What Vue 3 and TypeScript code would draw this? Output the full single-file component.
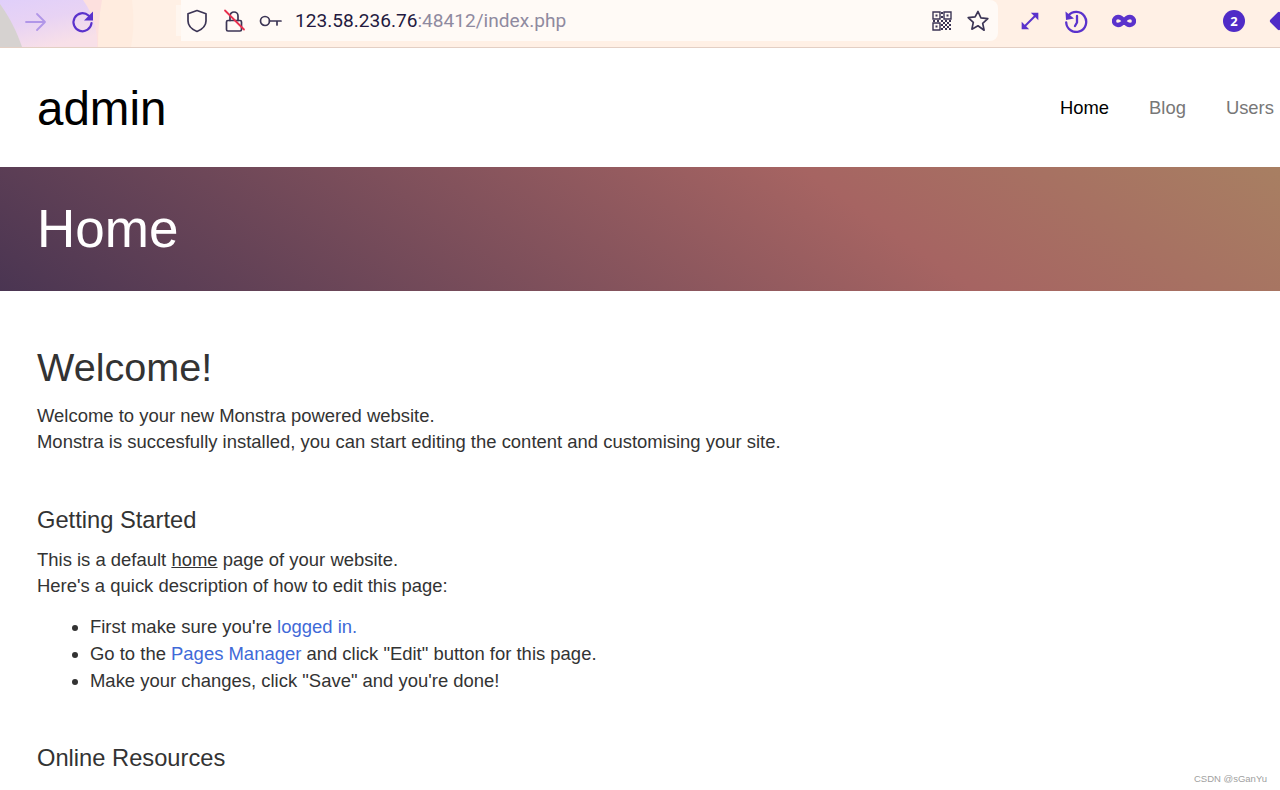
<script setup lang="ts">
const navItems = [
  { label: 'Home', active: true },
  { label: 'Blog', active: false },
  { label: 'Users', active: false },
]
</script>

<template>
  <div class="page">
    <div class="toolbar">
      <svg class="wash" viewBox="0 0 180 47" preserveAspectRatio="none">
        <path d="M0 0H132C134 16 134 32 131 47H0Z" fill="#ffecdf" />
        <path d="M0 0H102C99 16 98 32 98 47H0Z" fill="#fde0de" />
        <path d="M0 0H83C93 14 98 30 97 47H0Z" fill="url(#lilac)" />
        <path d="M0 4C10 18 17 32 22 47H0Z" fill="#d6d2d0" />
        <defs>
          <linearGradient id="lilac" x1="0" y1="0" x2="0.500" y2="1">
            <stop offset="0" stop-color="#e0cffa" />
            <stop offset="0.500" stop-color="#e8d3f4" />
            <stop offset="1" stop-color="#f8e0e8" />
          </linearGradient>
        </defs>
      </svg>
      <div class="nav-buttons">
        <svg class="ic fwd" viewBox="0 0 24 24"><path d="M2 12h19M13 4l8 8-8 8" /></svg>
        <svg class="ic reload" viewBox="0 0 24 24"><path d="M20.500 13a9 9 0 1 1-3-7.500L20 8" /><path class="fill" d="M22 1.500v9h-9z" /></svg>
      </div>
      <div class="urlbar">
        <svg class="ic ub" viewBox="0 0 24 24"><path d="M12 1.500l9 3.200v7.300c0 5-3.500 8.200-9 10.500-5.500-2.300-9-5.500-9-10.500V4.700z" /></svg>
        <svg class="ic ub lock" viewBox="0 0 24 24"><rect x="4.500" y="11.500" width="15" height="10.500" rx="1.500" /><path d="M8 11.500V7a4 4 0 0 1 8 0v4.500" /><path class="slash" d="M3 1.500l19 19" /></svg>
        <svg class="ic ub key" viewBox="0 0 24 24"><circle cx="7" cy="12" r="4.500" /><path d="M11.500 12H23M19 12v4" /></svg>
        <div class="url">123.58.236.76<span class="url-rest">:48412/index.php</span></div>
        <svg class="ic qr" viewBox="0 0 20 20">
          <path class="qr-outline" d="M1 1h7v7H1zM12 1h7v7h-7zM1 12h7v7H1z" />
          <path class="qr-dots" d="M3.500 3.500h2v2h-2zM14.500 3.500h2v2h-2zM3.500 14.500h2v2h-2zM9 1h2v2H9zM9 5h2v2H9zM9 9h2v2H9zM1 9h2v2H1zM5 9h2v2H5zM13 9h2v2h-2zM17 9h2v2h-2zM11 11h2v2h-2zM15 11h2v2h-2zM9 13h2v2H9zM13 13h2v2h-2zM17 13h2v2h-2zM11 15h2v2h-2zM15 15h2v2h-2zM9 17h2v2H9zM13 17h2v2h-2zM17 17h2v2h-2z" />
        </svg>
        <svg class="ic ub star" viewBox="0 0 24 24"><path d="M12 2.500l2.900 6.300 6.900.8-5.100 4.700 1.400 6.900L12 16.800l-6.100 3.400 1.400-6.900-5.100-4.700 6.900-.8z" /></svg>
      </div>
      <div class="ext">
        <svg class="ic expand" viewBox="0 0 24 24"><path d="M6 18L18 6" /><path class="fill" d="M13 2h9v9zM2 13v9h9z" /></svg>
        <svg class="ic history" viewBox="0 0 24 24"><path d="M4.500 6.500a10 10 0 1 1-2.300 7" /><path class="fill" d="M1.500 2.500l8.500 7-8 1.500z" /><path d="M13 7v6.500l-2 3.500" /></svg>
        <svg class="ic inf" viewBox="0 0 24 24"><path d="M12 12c-2-3-4-4-6-4a4 4 0 0 0 0 8c2 0 4-1 6-4s4-4 6-4a4 4 0 0 1 0 8c-2 0-4-1-6-4z" /></svg>
        <div class="badge">2</div>
        <div class="diamond"></div>
      </div>
    </div>

    <header class="site-head">
      <div class="brand">admin</div>
      <nav class="site-nav">
        <a v-for="item in navItems" :key="item.label" :class="{ active: item.active }">{{ item.label }}</a>
      </nav>
    </header>

    <section class="hero"><h1>Home</h1></section>

    <main class="content">
      <h2>Welcome!</h2>
      <p>Welcome to your new Monstra powered website.<br />Monstra is succesfully installed, you can start editing the content and customising your site.</p>
      <h3>Getting Started</h3>
      <p>This is a default <u>home</u> page of your website.<br />Here's a quick description of how to edit this page:</p>
      <ul>
        <li>First make sure you're <a>logged in.</a></li>
        <li>Go to the <a>Pages Manager</a> and click "Edit" button for this page.</li>
        <li>Make your changes, click "Save" and you're done!</li>
      </ul>
      <h3 class="last">Online Resources</h3>
    </main>

    <div class="watermark">CSDN @sGanYu</div>
  </div>
</template>

<style>
html, body { margin: 0; background: #fff; overflow: hidden; }
</style>

<style scoped>
.page {
  position: relative;
  width: 1280px;
  height: 790px;
  overflow: hidden;
  font-family: "Liberation Sans", Arial, sans-serif;
  color: #333;
  background: #fff;
}
.toolbar {
  position: relative;
  height: 47px;
  display: flex;
  align-items: flex-start;
  overflow: hidden;
  border-bottom: 1.500px solid #e3cfc4;
  background: #fff0e5;
}
.wash {
  position: absolute;
  left: 0;
  top: 0;
  width: 180px;
  height: 47px;
}
.nav-buttons {
  position: relative;
  display: flex;
  align-items: center;
  gap: 23px;
  height: 44px;
  padding-left: 24px;
  width: 181px;
  flex: none;
  box-sizing: border-box;
}
.ic {
  width: 24px;
  height: 24px;
  fill: none;
  stroke-linecap: round;
  stroke-linejoin: round;
  flex: none;
}
.ic .fill { fill: currentColor; stroke: none; }
.fwd { stroke: #b196e8; stroke-width: 1.800; }
.reload { color: #5a32cc; stroke: #5a32cc; stroke-width: 2.200; }
.urlbar {
  position: relative;
  width: 817px;
  height: 41px;
  flex: none;
  display: flex;
  align-items: center;
  background: #fffaf6;
  border-radius: 0 8px 8px 0;
  box-sizing: border-box;
  padding: 0 0 0 4px;
}
.urlbar::before {
  content: "";
  position: absolute;
  left: -5px;
  top: 5px;
  width: 5px;
  height: 31px;
  background: #fff6ef;
}
.ub { stroke: #3c3555; stroke-width: 1.700; }
.lock { margin-left: 13px; }
.lock .slash { stroke: #e8304e; stroke-width: 1.800; }
.key { margin-left: 12px; }
.url {
  margin-left: 13px;
  width: 637px;
  flex: none;
  font-family: Roboto, "Noto Sans", sans-serif;
  font-size: 19.100px;
  color: #23193f;
  white-space: nowrap;
}
.url-rest { color: #8f8aa0; }
.qr { width: 20px; height: 20px; }
.qr .qr-outline { stroke: #3c3555; stroke-width: 1.400; stroke-linejoin: miter; }
.qr .qr-dots { fill: #3c3555; stroke: none; }
.star { margin-left: 14px; }
.ext {
  position: relative;
  flex: 1;
  display: flex;
  align-items: center;
  padding-left: 22px;
  height: 41px;
}
.expand { width: 20px; height: 20px; color: #5a32cc; stroke: #5a32cc; stroke-width: 2.400; }
.history { margin-left: 24px; color: #5a32cc; stroke: #5a32cc; stroke-width: 2.300; }
.inf { margin-left: 24px; stroke: #5a32cc; stroke-width: 4.300; }
.badge {
  width: 22px;
  height: 22px;
  margin-left: 87px;
  flex: none;
  border-radius: 50%;
  background: #4f2bc7;
  color: #fff;
  font-size: 13px;
  font-weight: 700;
  line-height: 22px;
  text-align: center;
  font-family: "Open Sans", sans-serif;
}
.diamond {
  width: 14px;
  height: 14px;
  margin-left: 27px;
  flex: none;
  background: #4f2bc7;
  transform: rotate(45deg);
  border-radius: 2px;
}
.site-head {
  height: 118.500px;
  box-sizing: border-box;
  padding: 2px 0 0 37px;
  display: flex;
  align-items: center;
  justify-content: space-between;
}
.brand {
  font-size: 47.500px;
  color: #000;
  line-height: 1;
}
.site-nav {
  display: flex;
  gap: 40px;
  font-size: 18.400px;
  color: #777;
  width: 220px;
  flex: none;
  white-space: nowrap;
}
.site-nav .active { color: #000; }
.hero {
  height: 124px;
  display: flex;
  align-items: center;
  padding-left: 37px;
  background: linear-gradient(35deg, #4a3552 0%, #a66462 67%, #a87f62 100%);
}
.hero h1 {
  margin: 0;
  font-size: 53px;
  font-weight: 400;
  color: #fff;
}
.content {
  padding: 53px 37px 0;
  font-size: 18.470px;
  line-height: 26px;
}
h2 {
  margin: 0 0 13.500px;
  font-size: 39.600px;
  font-weight: 400;
  line-height: 46px;
}
p { margin: 0; }
h3 {
  margin: 51px 0 13px;
  font-size: 23.700px;
  font-weight: 400;
  line-height: 28px;
}
ul {
  margin: 13.500px 0 0;
  padding-left: 53px;
}
li { line-height: 27px; }
li a { color: #3f6ad8; }
h3.last { margin-top: 50.500px; }
.watermark {
  position: absolute;
  right: 13px;
  bottom: 6px;
  font-size: 9.500px;
  color: #a0a0a0;
}
</style>
